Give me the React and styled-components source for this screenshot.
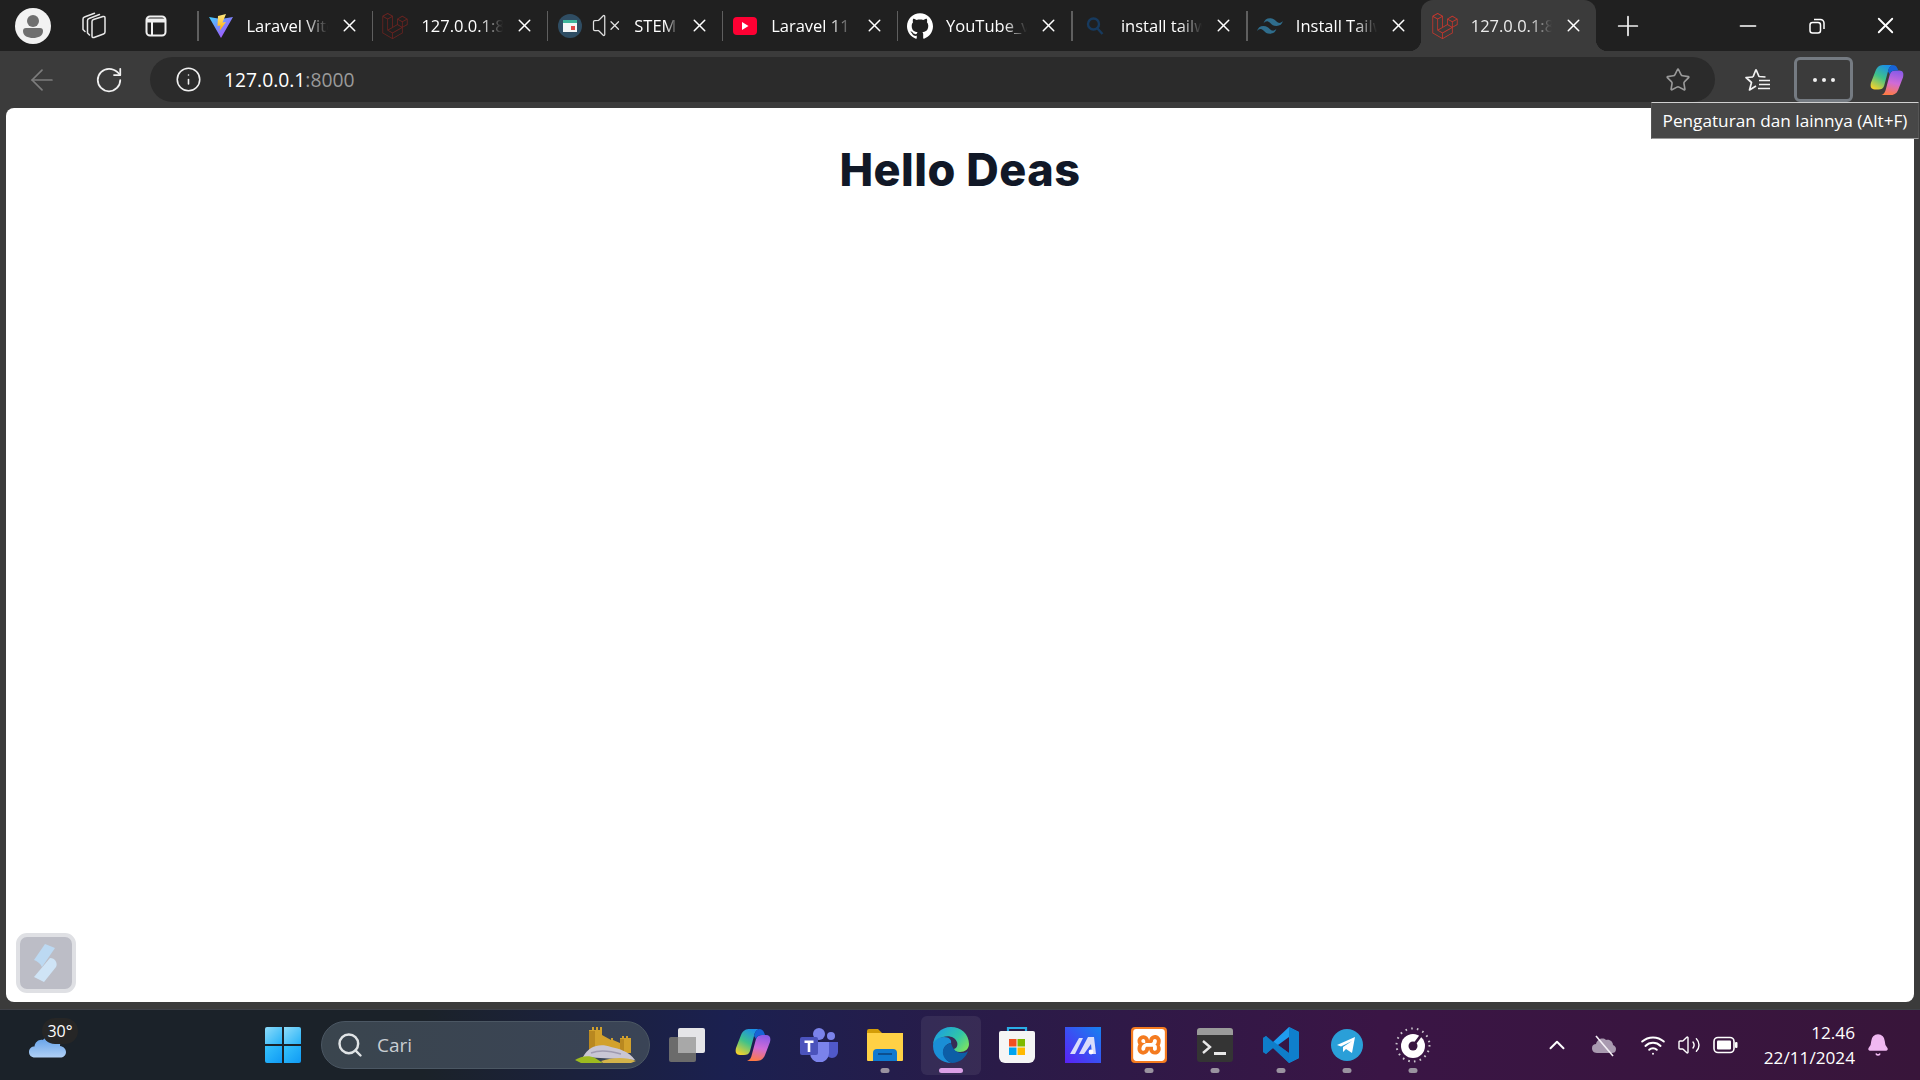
import styled, { createGlobalStyle } from 'styled-components';
import {
	ArrowLeft,
	RotateCw,
	Info,
	Star,
	X,
	Plus,
	Minus,
	Search,
	ChevronUp,
	Wifi,
	Volume2,
	VolumeX,
	Bell,
} from 'lucide-react';
import { SiGithub, SiLaravel, SiTailwindcss, SiXampp } from 'react-icons/si';

const GlobalStyle = createGlobalStyle`
	html, body {
		margin: 0;
		padding: 0;
		width: 1920px;
		height: 1080px;
		overflow: hidden;
		background: #3b3b3b;
		font-family: "Open Sans", "Noto Sans", sans-serif;
	}
`;

const ViteIcon = () => (
	<svg width="26" height="26" viewBox="0 0 26 26">
		<defs>
			<linearGradient id="viteA" x1="0" y1="0" x2="1" y2="1">
				<stop offset="0" stopColor="#41d1ff" />
				<stop offset="1" stopColor="#bd34fe" />
			</linearGradient>
			<linearGradient id="viteB" x1="0" y1="0" x2="0" y2="1">
				<stop offset="0" stopColor="#ffea83" />
				<stop offset="1" stopColor="#ffa800" />
			</linearGradient>
		</defs>
		<path d="M1 4 L13 6 L25 4 L13 25 Z" fill="url(#viteA)" />
		<path d="M18 1 L10 3 L9.5 13 L12.5 12.5 L11.5 18 L18 9 L14.5 9.5 Z" fill="url(#viteB)" />
	</svg>
);

const StemIcon = () => (
	<svg width="26" height="26" viewBox="0 0 26 26">
		<circle cx="13" cy="13" r="12" fill="#2f4d63" />
		<rect x="6" y="7" width="14" height="12" fill="#f4f6f6" />
		<rect x="6" y="7" width="14" height="3" fill="#3fb59b" />
		<rect x="14" y="13" width="4" height="4" fill="#e04848" />
	</svg>
);

const YoutubeIcon = () => (
	<svg width="26" height="22" viewBox="0 0 26 22">
		<rect x="1" y="2" width="24" height="18" rx="4" fill="#ff0033" />
		<path d="M10 7 L16.5 11 L10 15 Z" fill="#fff" />
	</svg>
);

const SearchFavicon = () => (
	<svg width="22" height="22" viewBox="0 0 22 22" fill="none" stroke="#173a5e" strokeWidth="2.4">
		<circle cx="9.5" cy="9" r="5.5" />
		<path d="M13.5 13.5 L18.5 19" />
	</svg>
);

const Avatar = () => (
	<svg width="36" height="36" viewBox="0 0 36 36">
		<circle cx="18" cy="18" r="18" fill="#f2f2f2" />
		<circle cx="18" cy="13" r="6" fill="#6f6f6f" />
		<path d="M8 23 a3 3 0 0 1 3 -3 h14 a3 3 0 0 1 3 3 c0 5 -5 7 -10 7 s-10 -2 -10 -7 Z" fill="#6f6f6f" />
	</svg>
);

const CollectionsIcon = () => (
	<svg width="26" height="27" viewBox="0 0 26 27" fill="none" stroke="#e8e8e8" strokeWidth="1.5" strokeLinejoin="round" strokeLinecap="round">
		<path d="M12 9.5 Q12 8 13.5 7.5 L23 4.5 Q25 4 25 6 V20 Q25 21.5 23.5 22 L14 25.5 Q12 26 12 24 Z" />
		<path d="M9.5 23 L7.5 21 V8.5 Q7.5 7 9 6.5 L19.5 2.5" />
		<path d="M5 19.5 L3 17.5 V7 Q3 5.5 4.5 5 L14.5 1.2" />
	</svg>
);

const TabActionsIcon = () => (
	<svg width="24" height="24" viewBox="0 0 24 24" fill="none" stroke="#f0f0f0" strokeWidth="2">
		<rect x="2.5" y="2.5" width="19" height="19" rx="3.5" />
		<path d="M2.5 6.5 H21.5" strokeWidth="4" />
		<path d="M8 7.5 V21.5" />
	</svg>
);

const StarListIcon = () => (
	<svg width="28" height="26" viewBox="0 0 28 26" fill="none" stroke="#f2f2f2" strokeWidth="1.7" strokeLinejoin="round">
		<path d="M12 2.5 L15 9.5 L21.5 10 M9 10 L2 10.5 L7.5 15.5 L5.5 23 L12 19" />
		<path d="M9 10 L12 2.5" />
		<path d="M15 13.5 H26 M15 17.5 H26 M14 21.5 H26" />
	</svg>
);

const RestoreIcon = () => (
	<svg width="16" height="16" viewBox="0 0 16 16" fill="none" stroke="#fff" strokeWidth="1.5">
		<rect x="1" y="4.5" width="10.5" height="10.5" rx="2.5" />
		<path d="M5 1.5 H11.5 a3.5 3.5 0 0 1 3.5 3.5 V11" />
	</svg>
);

const CopilotIcon = ({ id, size }) => (
	<svg width={size} height={size} viewBox="0 0 36 36">
		<defs>
			<linearGradient id={`${id}a`} x1="0.7" y1="0" x2="0.2" y2="1">
				<stop offset="0" stopColor="#1b8fe8" />
				<stop offset="0.5" stopColor="#3fc28a" />
				<stop offset="1" stopColor="#f5d12c" />
			</linearGradient>
			<linearGradient id={`${id}b`} x1="0.6" y1="0" x2="0.4" y2="1">
				<stop offset="0" stopColor="#8a5be8" />
				<stop offset="0.5" stopColor="#d06bd6" />
				<stop offset="1" stopColor="#ff7a45" />
			</linearGradient>
		</defs>
		<path d="M15 2 H24 C21 3 20 5 19 9 L15 24 C14 27 12 28 9 28 H5 C1 28 0 25 1 21 L6 8 C8 3 11 2 15 2 Z" fill={`url(#${id}a)`} />
		<path d="M21 34 H12 C15 33 16 31 17 27 L21 12 C22 9 24 8 27 8 H31 C35 8 36 11 35 15 L30 28 C28 33 25 34 21 34 Z" fill={`url(#${id}b)`} />
		<path d="M15 2 H24 C28 2 29 5 30 8 H27 C24 8 22 9 21 12 L19 9 C20 5 21 3 24 2 Z" fill="#1763d6" />
	</svg>
);

const WidgetIcon = () => (
	<svg width="30" height="40" viewBox="0 0 30 40">
		<path d="M14 1 L24 5 L11 24 C9 20 6 18 3 17 Z" fill="#bcd9f2" />
		<path d="M19 15 C24 15 27 20 25 24 L13 39 L3 34 Z" fill="#cfe4f6" />
	</svg>
);

const WeatherCloud = () => (
	<svg width="37" height="24" viewBox="0 0 37 24">
		<defs>
			<linearGradient id="cloudFill" x1="0" y1="0" x2="0" y2="1">
				<stop offset="0" stopColor="#5f9ee8" />
				<stop offset="1" stopColor="#b0d0f5" />
			</linearGradient>
		</defs>
		<rect x="28" y="0" width="6" height="7" fill="#e8701a" />
		<path d="M6 23.5 C2 23.5 0 21 0 18 C0 14.5 2.5 12.5 5.5 12.5 C6 8 10 5 14 6 C16 2 24 1 28 5 C31 7 31.5 10 31 12 C34.5 12.5 37 15 37 18 C37 21.5 34.5 23.5 31 23.5 Z" fill="url(#cloudFill)" />
	</svg>
);

const StartIcon = () => (
	<svg width="36" height="36" viewBox="0 0 36 36">
		<defs>
			<linearGradient id="winTop" x1="0" y1="0" x2="1" y2="1">
				<stop offset="0" stopColor="#8ddcfa" />
				<stop offset="1" stopColor="#27b2f8" />
			</linearGradient>
			<linearGradient id="winBottom" x1="0" y1="0" x2="1" y2="1">
				<stop offset="0" stopColor="#36c2fb" />
				<stop offset="1" stopColor="#0f9af5" />
			</linearGradient>
		</defs>
		<path d="M0 2 a2 2 0 0 1 2 -2 H17 V17 H0 Z" fill="url(#winTop)" />
		<path d="M19 0 H34 a2 2 0 0 1 2 2 V17 H19 Z" fill="url(#winTop)" />
		<path d="M0 19 H17 V36 H2 a2 2 0 0 1 -2 -2 Z" fill="url(#winBottom)" />
		<path d="M19 19 H36 V34 a2 2 0 0 1 -2 2 H19 Z" fill="url(#winBottom)" />
	</svg>
);

const CastleIcon = () => (
	<svg width="62" height="36" viewBox="0 0 62 36">
		<path d="M14 3 h3 v-3 h2 v3 h2 v-3 h2 v3 h2 v-3 h2 v8 L36 13 v-2 h2 v2 L45 16 V11 h2 v-2 h2 v2 h2 v-2 h2 v2 h3 V26 H14 Z" fill="#d2a12c" />
		<path d="M14 4 h6 V22 H14 Z M45 12 h4 V26 h-4 Z" fill="#b98820" />
		<path d="M8 30 C14 18 26 16 36 20 C44 22 54 24 60 33 Z" fill="#c9c6d4" />
		<path d="M16 26 C26 22 36 24 46 27" fill="none" stroke="#9f9bb0" strokeWidth="1.5" />
		<path d="M0 33 C6 29 14 28 20 31 L28 36 H6 Z" fill="#9dbb1f" />
		<path d="M26 34 C38 30 52 30 61 34 L56 36 H28 Z" fill="#d3b34a" />
	</svg>
);

const TaskViewIcon = () => (
	<svg width="36" height="34" viewBox="0 0 36 34">
		<rect x="0" y="9" width="27" height="25" rx="2" fill="#6b6b6b" />
		<rect x="9" y="0" width="27" height="25" rx="2" fill="#f0f0f0" fillOpacity="0.95" />
		<rect x="9" y="9" width="18" height="16" fill="#a8a8a8" />
	</svg>
);

const TeamsIcon = () => (
	<svg width="38" height="34" viewBox="0 0 38 34">
		<circle cx="31" cy="8" r="4" fill="#7b83eb" />
		<path d="M25 14 H38 V24 a6 6 0 0 1 -12 0 Z" fill="#5059c9" />
		<circle cx="19" cy="6" r="6" fill="#7b83eb" />
		<path d="M10 14 H29 V25 a9 9 0 0 1 -19 0 Z" fill="#7b83eb" />
		<rect x="0" y="9" width="18" height="18" rx="2" fill="#4b53bc" />
		<path d="M4.5 12.5 H13.5 V15 H10.3 V24 H7.7 V15 H4.5 Z" fill="#fff" />
	</svg>
);

const ExplorerIcon = () => (
	<svg width="36" height="34" viewBox="0 0 36 34">
		<path d="M0 3 a2 2 0 0 1 2 -2 H11 L15 5 H36 V10 H0 Z" fill="#d39d08" />
		<path d="M0 5 H36 V32 a1 1 0 0 1 -1 1 H1 a1 1 0 0 1 -1 -1 Z" fill="#ffd145" />
		<path d="M6 33 V25 a4 4 0 0 1 4 -4 H26 a4 4 0 0 1 4 4 V33 Z" fill="#0f79cf" />
		<rect x="11" y="25" width="14" height="2" fill="#0c4f8f" />
	</svg>
);

const EdgeIcon = () => (
	<svg width="36" height="36" viewBox="0 0 36 36">
		<defs>
			<linearGradient id="edgeTop" x1="0" y1="0.2" x2="1" y2="0.8">
				<stop offset="0" stopColor="#1b9de2" />
				<stop offset="0.6" stopColor="#30c6a8" />
				<stop offset="1" stopColor="#7ee35f" />
			</linearGradient>
		</defs>
		<path d="M18 0 C28 0 36 7 36 17 C36 22 32 25 27 25 C23 25 21 24 21 22 C24 21 25 18 24 15 C22 10 16 8 10 10 C4 12 0 16 0 19 C0 8 8 0 18 0 Z" fill="url(#edgeTop)" />
		<path d="M0 19 C0 14 5 10 11 10 C16 10 19 13 18 16 C12 17 9 22 11 28 C12 32 15 35 19 36 C8 36 0 29 0 19 Z" fill="#1a8fd6" />
		<path d="M18 16 C19 20 22 26 29 26 C32 26 34 25 35 24 C33 31 26 36 19 36 C13 34 9 29 10 24 C11 19 14 17 18 16 Z" fill="#0d5ea6" />
	</svg>
);

const StoreIcon = () => (
	<svg width="36" height="36" viewBox="0 0 36 36">
		<path d="M9 5 V1 H27 V5" fill="none" stroke="#2aaee6" strokeWidth="2.2" />
		<path d="M0 6 a2 2 0 0 1 2 -2 H34 a2 2 0 0 1 2 2 V30 a6 6 0 0 1 -6 6 H6 a6 6 0 0 1 -6 -6 Z" fill="#f5f5f5" />
		<rect x="10" y="12" width="7.5" height="7.5" fill="#f25022" />
		<rect x="18.5" y="12" width="7.5" height="7.5" fill="#7fba00" />
		<rect x="10" y="20.5" width="7.5" height="7.5" fill="#00a4ef" />
		<rect x="18.5" y="20.5" width="7.5" height="7.5" fill="#ffb900" />
	</svg>
);

const MiroIcon = () => (
	<svg width="36" height="36" viewBox="0 0 36 36">
		<defs>
			<linearGradient id="miroBg" x1="0" y1="1" x2="1" y2="0">
				<stop offset="0" stopColor="#5b21f5" />
				<stop offset="1" stopColor="#1682f0" />
			</linearGradient>
		</defs>
		<rect width="36" height="36" fill="url(#miroBg)" />
		<path d="M5 27 L14 11 H18 L10 27 Z M14 27 L23 10 H29 L31 27 H27 L26 17 L19 27 Z" fill="#d9dcfb" />
		<circle cx="26" cy="25" r="2.4" fill="#fff" />
	</svg>
);

const TerminalIcon = () => (
	<svg width="36" height="34" viewBox="0 0 36 34">
		<rect width="36" height="34" rx="3" fill="#343434" />
		<path d="M0 3 a3 3 0 0 1 3 -3 H33 a3 3 0 0 1 3 3 V7 H0 Z" fill="#9a9a9a" />
		<path d="M6 13 L13 19 L6 25" fill="none" stroke="#e8e8e8" strokeWidth="2.4" />
		<rect x="17" y="24" width="12" height="3" fill="#e8e8e8" />
	</svg>
);

const VsCodeIcon = () => (
	<svg width="36" height="36" viewBox="0 0 36 36">
		<path d="M26 0 L36 5 V31 L26 36 L10 21 L3 27 L0 25 V11 L3 9 L10 15 Z M26 10 L15 18 L26 26 Z" fill="#1f9cf0" />
		<path d="M26 0 L36 5 V31 L26 36 Z" fill="#0f7fcc" />
		<path d="M0 11 L3 9 L26 26 V36 L10 21 L3 27 L0 25 Z" fill="#0065a9" fillOpacity="0.55" />
	</svg>
);

const TelegramIcon = () => (
	<svg width="32" height="32" viewBox="0 0 32 32">
		<circle cx="16" cy="16" r="16" fill="#2a9fd8" />
		<path d="M6 16 L24 8 L21 24 L15 20 L12 23 L12 18 L21 12 L10 17.5 Z" fill="#fff" />
	</svg>
);

const SpeedoIcon = () => (
	<svg width="36" height="36" viewBox="0 0 36 36">
		<circle cx="18" cy="18" r="16.5" fill="none" stroke="#c9c4cc" strokeWidth="2" strokeDasharray="1.6 4.2" />
		<circle cx="18" cy="19" r="12" fill="#fff" />
		<circle cx="18" cy="19" r="4.5" fill="#381540" />
		<path d="M18 19 L27 7" stroke="#381540" strokeWidth="2.6" />
	</svg>
);

const CloudOffIcon = () => (
	<svg width="26" height="26" viewBox="0 0 26 26">
		<path d="M6 21 C2 21 1 18 1 16 C1 13 3 12 5 12 C6 7 12 5 15 8 C19 7 22 10 22 13 C24 14 25 15 25 17 C25 20 23 21 21 21 Z" fill="#a99ab0" />
		<path d="M5 4 L22 24" stroke="#f5f0f6" strokeWidth="1.6" />
	</svg>
);

const BatteryIcon = () => (
	<svg width="25" height="18" viewBox="0 0 25 18" fill="none">
		<rect x="1" y="1.5" width="20" height="15" rx="4" stroke="#fff" strokeWidth="1.6" />
		<rect x="4" y="4.5" width="14" height="9" rx="1" fill="#fff" />
		<rect x="22" y="6" width="2.5" height="6" rx="1" fill="#fff" />
	</svg>
);

const XamppIcon = () => (
	<OrangeBox>
		<SiXampp size={32} color="#fff" />
	</OrangeBox>
);

const TABS = [
	{ icon: <ViteIcon />, title: 'Laravel Vite' },
	{ icon: <SiLaravel size={26} color="#6b2320" />, title: '127.0.0.1:8000' },
	{ icon: <StemIcon />, title: 'STEM Academy', muted: true },
	{ icon: <YoutubeIcon />, title: 'Laravel 11 Tutorial' },
	{ icon: <SiGithub size={26} color="#fff" />, title: 'YouTube_video' },
	{ icon: <SearchFavicon />, title: 'install tailwind' },
	{ icon: <SiTailwindcss size={26} color="#2f6d8c" />, title: 'Install Tailwind' },
	{ icon: <SiLaravel size={26} color="#c8372d" />, title: '127.0.0.1:8000', active: true },
];

const TASK_ICONS = [
	{ icon: <TaskViewIcon /> },
	{ icon: <CopilotIcon id="taskCopilot" size={36} /> },
	{ icon: <TeamsIcon /> },
	{ icon: <ExplorerIcon />, running: true },
	{ icon: <EdgeIcon />, running: true, focused: true },
	{ icon: <StoreIcon /> },
	{ icon: <MiroIcon /> },
	{ icon: <XamppIcon />, running: true },
	{ icon: <TerminalIcon />, running: true },
	{ icon: <VsCodeIcon />, running: true },
	{ icon: <TelegramIcon />, running: true },
	{ icon: <SpeedoIcon />, running: true },
];

const App = () => {
	return (
		<Screen>
			<GlobalStyle />
			<TitleBar>
				<Slot $w={66}><Avatar /></Slot>
				<Slot $w={54}><CollectionsIcon /></Slot>
				<Slot $w={72}><TabActionsIcon /></Slot>
				<TabStrip>
					{TABS.map((tab, i) => (
						<Tab key={i} $active={tab.active}>
							<Favicon>{tab.icon}</Favicon>
							{tab.muted && (
								<MuteIcon>
									<VolumeX size={31} color="#e0e0e0" strokeWidth={1} />
								</MuteIcon>
							)}
							<TabTitle $active={tab.active}>{tab.title}</TabTitle>
							<TabClose>
								<X size={21} color="#fff" strokeWidth={1.7} />
							</TabClose>
						</Tab>
					))}
				</TabStrip>
				<Slot $w={64}>
					<Plus size={32} color="#f0f0f0" strokeWidth={1.3} />
				</Slot>
				<WindowControls>
					<Slot $w={69}><Minus size={26} color="#fff" strokeWidth={1.5} /></Slot>
					<Slot $w={69}><RestoreIcon /></Slot>
					<Slot $w={69}><X size={27} color="#fff" strokeWidth={1.6} /></Slot>
				</WindowControls>
			</TitleBar>

			<Toolbar>
				<Slot $w={62}><ArrowLeft size={34} color="#7d7d7d" strokeWidth={1.2} /></Slot>
				<Slot $w={72}><RotateCw size={30} color="#f0f0f0" strokeWidth={1.4} /></Slot>
				<AddressBar>
					<Slot $w={28}><Info size={27} color="#f0f0f0" strokeWidth={1.4} /></Slot>
					<Url>127.0.0.1<span>:8000</span></Url>
					<StarSlot><Star size={26} color="#9a9a9a" strokeWidth={1.5} /></StarSlot>
				</AddressBar>
				<FavSlot><StarListIcon /></FavSlot>
				<MenuButton>
					<Dot /><Dot /><Dot />
				</MenuButton>
				<Slot $w={67}><CopilotIcon id="barCopilot" size={34} /></Slot>
				<Tooltip>Pengaturan dan lainnya (Alt+F)</Tooltip>
			</Toolbar>

			<Page>
				<Heading>Hello Deas</Heading>
				<FloatingWidget>
					<WidgetIcon />
				</FloatingWidget>
			</Page>

			<Taskbar>
				<Weather>
					<WeatherCloud />
					<Temp>30°</Temp>
				</Weather>
				<Slot $w={66}><StartIcon /></Slot>
				<SearchBox>
					<Search size={28} color="#e0e4e6" strokeWidth={2.1} />
					<SearchText>Cari</SearchText>
					<CastleIcon />
				</SearchBox>
				<TaskIcons>
					{TASK_ICONS.map((item, i) => (
						<TaskButton key={i} $focused={item.focused}>
							{item.icon}
							{item.running && <RunDot $focused={item.focused} />}
						</TaskButton>
					))}
				</TaskIcons>
				<Tray>
					<Slot $w={44}><ChevronUp size={26} color="#fff" strokeWidth={1.8} /></Slot>
					<Slot $w={50}><CloudOffIcon /></Slot>
					<Slot $w={48}><Wifi size={26} color="#fff" strokeWidth={1.8} /></Slot>
					<Slot $w={24}><Volume2 size={26} color="#fff" strokeWidth={1.4} /></Slot>
					<Slot $w={48}><BatteryIcon /></Slot>
					<Clock>
						<span>12.46</span>
						<span>22/11/2024</span>
					</Clock>
					<Slot $w={46}><Bell size={24} color="#f0b8f2" fill="#f0b8f2" strokeWidth={1.5} /></Slot>
				</Tray>
			</Taskbar>
		</Screen>
	);
};

const Screen = styled.div`
	width: 1920px;
	height: 1080px;
	display: flex;
	flex-direction: column;
	overflow: hidden;
	background: #3b3b3b;
`;

const Slot = styled.div`
	width: ${(p) => p.$w}px;
	flex-shrink: 0;
	display: flex;
	align-items: center;
	justify-content: center;
`;

const TitleBar = styled.div`
	height: 51px;
	flex-shrink: 0;
	display: flex;
	align-items: center;
	background: #202020;
`;

const TabStrip = styled.div`
	display: flex;
	margin-left: 5px;
	height: 100%;
`;

const Tab = styled.div`
	position: relative;
	width: 174.9px;
	box-sizing: border-box;
	height: 51px;
	display: flex;
	align-items: center;
	padding-left: 10.5px;
	background: ${(p) => (p.$active ? '#3b3b3b' : 'transparent')};
	border-radius: ${(p) => (p.$active ? '12px 12px 0 0' : '0')};

	&::before {
		content: '';
		position: absolute;
		left: 0;
		top: 11px;
		bottom: 10px;
		width: 1.5px;
		background: ${(p) => (p.$active ? 'transparent' : '#5f5f5f')};
	}

	&::after {
		content: '';
		display: ${(p) => (p.$active ? 'block' : 'none')};
		position: absolute;
		left: -12px;
		right: -12px;
		bottom: 0;
		height: 12px;
		background:
			radial-gradient(circle at 0 0, #202020 12px, #3b3b3b 12.5px) left / 12px 12px no-repeat,
			radial-gradient(circle at 100% 0, #202020 12px, #3b3b3b 12.5px) right / 12px 12px no-repeat;
	}
`;

const Favicon = styled.div`
	width: 26px;
	height: 26px;
	flex-shrink: 0;
	display: flex;
	align-items: center;
	justify-content: center;
`;

const MuteIcon = styled.div`
	width: 30px;
	margin-left: 8px;
	flex-shrink: 0;
	display: flex;
	justify-content: center;
`;

const TabTitle = styled.div`
	flex: 1;
	min-width: 0;
	margin-left: 13px;
	margin-right: 11px;
	font-size: 16.5px;
	color: #fff;
	white-space: nowrap;
	overflow: hidden;
	mask-image: linear-gradient(to right, #000 72%, transparent 100%);
	opacity: ${(p) => (p.$active ? 0.9 : 1)};
`;

const TabClose = styled.div`
	width: 21px;
	margin-right: 12px;
	flex-shrink: 0;
	display: flex;
	justify-content: center;
`;

const WindowControls = styled.div`
	display: flex;
	margin-left: auto;
`;

const Toolbar = styled.div`
	position: relative;
	height: 57px;
	box-sizing: border-box;
	flex-shrink: 0;
	display: flex;
	align-items: center;
	padding: 6px 0 6px 11px;
	background: #3b3b3b;
`;

const AddressBar = styled.div`
	width: 1565px;
	height: 45px;
	margin-left: 5px;
	padding-left: 24px;
	box-sizing: border-box;
	flex-shrink: 0;
	display: flex;
	align-items: center;
	background: #2b2b2b;
	border-radius: 23px;
`;

const Url = styled.div`
	margin-left: 22px;
	font-size: 19.3px;
	color: #fff;

	span {
		color: #9a9a9a;
	}
`;

const StarSlot = styled.div`
	margin-left: auto;
	margin-right: 23px;
	width: 28px;
	display: flex;
	justify-content: center;
`;

const FavSlot = styled.div`
	width: 56px;
	margin-left: 15px;
	flex-shrink: 0;
	display: flex;
	justify-content: center;
`;

const MenuButton = styled.div`
	width: 59px;
	height: 45px;
	margin-left: 8px;
	box-sizing: border-box;
	flex-shrink: 0;
	display: flex;
	align-items: center;
	justify-content: center;
	gap: 5px;
	border: 3px solid #757b82;
	border-radius: 6px;
`;

const Dot = styled.span`
	width: 4px;
	height: 4px;
	border-radius: 50%;
	background: #f0f0f0;
`;

const Tooltip = styled.div`
	position: absolute;
	right: 1px;
	top: 51px;
	height: 37px;
	width: 268px;
	box-sizing: border-box;
	z-index: 5;
	display: flex;
	align-items: center;
	justify-content: center;
	background: #474747;
	border: 1px solid #555;
	border-top-color: #d0d0d0;
	border-bottom-color: #9a9a9a;
	font-size: 17.2px;
	color: #fff;
	white-space: nowrap;
`;

const Page = styled.main`
	position: relative;
	height: 894px;
	flex-shrink: 0;
	margin: 0 6px;
	background: #fff;
	border-radius: 8px;
`;

const Heading = styled.h1`
	margin: 0;
	padding-top: 35px;
	text-align: center;
	font-family: Inter, "Open Sans", sans-serif;
	font-size: 45px;
	font-weight: 800;
	line-height: 54px;
	letter-spacing: 0.5px;
	color: #111827;
`;

const FloatingWidget = styled.div`
	position: absolute;
	left: 10px;
	bottom: 9px;
	width: 60px;
	height: 60px;
	box-sizing: border-box;
	display: flex;
	align-items: center;
	justify-content: center;
	background: #bcbdc6;
	border: 4px solid #dfe0e4;
	border-radius: 11px;
`;

const Taskbar = styled.footer`
	margin-top: 7px;
	flex: 1;
	display: flex;
	align-items: center;
	border-top: 1px solid #3f4148;
	background: linear-gradient(90deg, #1b2229 0%, #1b2229 22%, #1b2050 38%, #2a1b48 52%, #3a1545 72%, #38153a 100%);
`;

const Weather = styled.div`
	position: relative;
	width: 250px;
	flex-shrink: 0;
	height: 100%;
	box-sizing: border-box;
	padding: 24px 0 0 29px;
`;

const Temp = styled.div`
	position: absolute;
	left: 42px;
	top: 8px;
	width: 36px;
	height: 26px;
	display: flex;
	align-items: center;
	justify-content: center;
	border-radius: 13px;
	background: #262626;
	font-size: 16px;
	color: #fff;
`;

const SearchBox = styled.div`
	width: 329px;
	height: 48px;
	margin-left: 5px;
	padding: 0 12px 0 14px;
	box-sizing: border-box;
	flex-shrink: 0;
	display: flex;
	align-items: center;
	border: 1px solid #4b5763;
	border-radius: 24px;
	background: linear-gradient(90deg, #3a454e, #3a4456 100%);
`;

const SearchText = styled.span`
	margin-left: 13px;
	margin-right: auto;
	font-size: 19px;
	color: #c9ced2;
`;

const TaskIcons = styled.div`
	display: flex;
	margin-left: 4px;
`;

const TaskButton = styled.div`
	position: relative;
	width: 66px;
	height: 59px;
	display: flex;
	align-items: center;
	justify-content: center;

	&::before {
		content: '';
		display: ${(p) => (p.$focused ? 'block' : 'none')};
		position: absolute;
		left: 3px;
		right: 3px;
		top: 0;
		bottom: 0;
		border-radius: 6px;
		background: rgba(255, 255, 255, 0.07);
	}

	svg {
		position: relative;
	}
`;

const RunDot = styled.span`
	position: absolute;
	bottom: 2px;
	left: 50%;
	transform: translateX(-50%);
	width: ${(p) => (p.$focused ? '24px' : '9px')};
	height: 5px;
	border-radius: 3px;
	background: ${(p) => (p.$focused ? '#dba0e6' : '#9a93a0')};
`;

const OrangeBox = styled.div`
	width: 36px;
	height: 36px;
	border-radius: 4px;
	display: flex;
	align-items: center;
	justify-content: center;
	background: #f47b20;
`;

const Tray = styled.div`
	margin-left: auto;
	padding-right: 19px;
	display: flex;
	align-items: center;
`;

const Clock = styled.div`
	width: 106px;
	display: flex;
	flex-direction: column;
	align-items: flex-end;
	gap: 4px;
	font-size: 17.2px;
	line-height: 21px;
	color: #fff;
`;

export default App;
